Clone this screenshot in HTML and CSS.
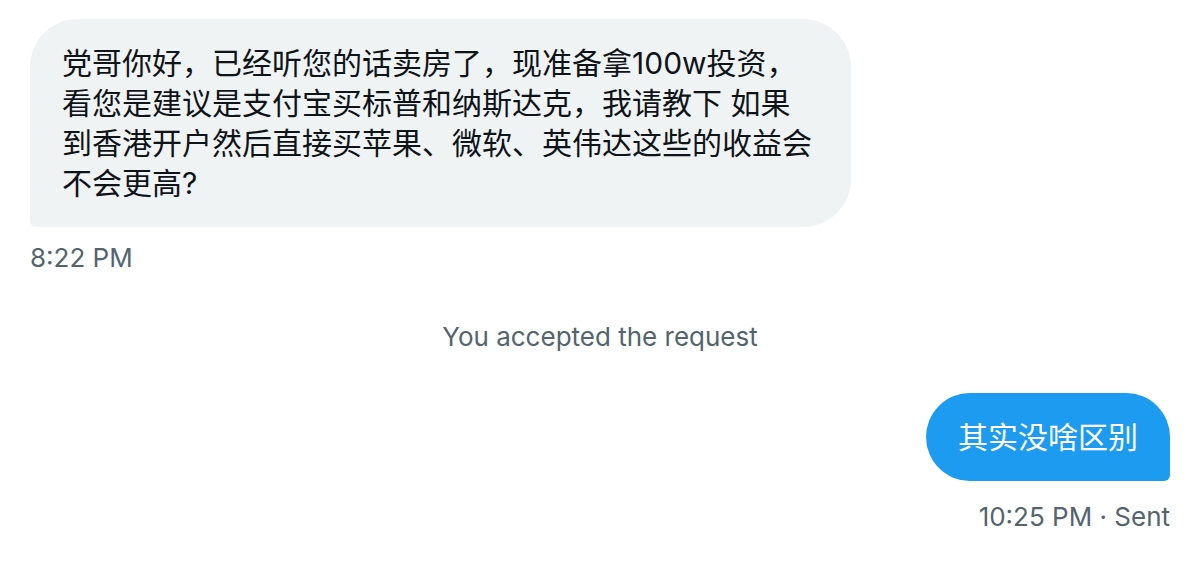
FILE: index.html
```html
<!DOCTYPE html>
<html lang="zh-CN">
<head>
    <meta charset="UTF-8">
    <meta name="viewport" content="width=device-width, initial-scale=1.0">
    <title>Messages</title>
    <link rel="stylesheet" href="styles.css">
</head>
<body>
    <div class="thread">
        <div class="entry received">
            <div class="bubble gray">党哥你好，已经听您的话卖房了，现准备拿100w投资，<br>看您是建议是支付宝买标普和纳斯达克，我请教下 如果<br>到香港开户然后直接买苹果、微软、英伟达这些的收益会<br>不会更高?</div>
            <div class="meta">8:22 PM</div>
        </div>

        <div class="notice">You accepted the request</div>

        <div class="entry sent">
            <div class="bubble blue">其实没啥区别</div>
            <div class="meta">10:25 PM · Sent</div>
        </div>
    </div>
</body>
</html>
```

FILE: styles.css
```css
body {
    margin: 0;
    background: #ffffff;
    font-family: Inter, "Noto Sans CJK SC", sans-serif;
    color: #0f1419;
}
.thread {
    display: flex;
    flex-direction: column;
    padding: 19px 30px 0 30px;
}
.entry {
    display: flex;
    flex-direction: column;
}
.entry.received {
    align-items: flex-start;
}
.entry.sent {
    align-items: flex-end;
    margin-top: 40px;
}
.bubble {
    font-size: 30px;
    line-height: 40px;
    padding: 24px 32px;
}
.bubble.gray {
    width: 757px;
    background: #eff3f4;
    color: #0f1419;
    border-radius: 48px 48px 48px 6px;
}
.bubble.blue {
    background: #1d9bf0;
    color: #ffffff;
    border-radius: 44px 44px 6px 44px;
}
.meta {
    margin-top: 15px;
    font-size: 26px;
    line-height: 32px;
    color: #536471;
}
.sent .meta {
    margin-top: 20px;
}
.notice {
    margin-top: 47px;
    text-align: center;
    font-size: 26px;
    line-height: 32px;
    color: #536471;
}
```
